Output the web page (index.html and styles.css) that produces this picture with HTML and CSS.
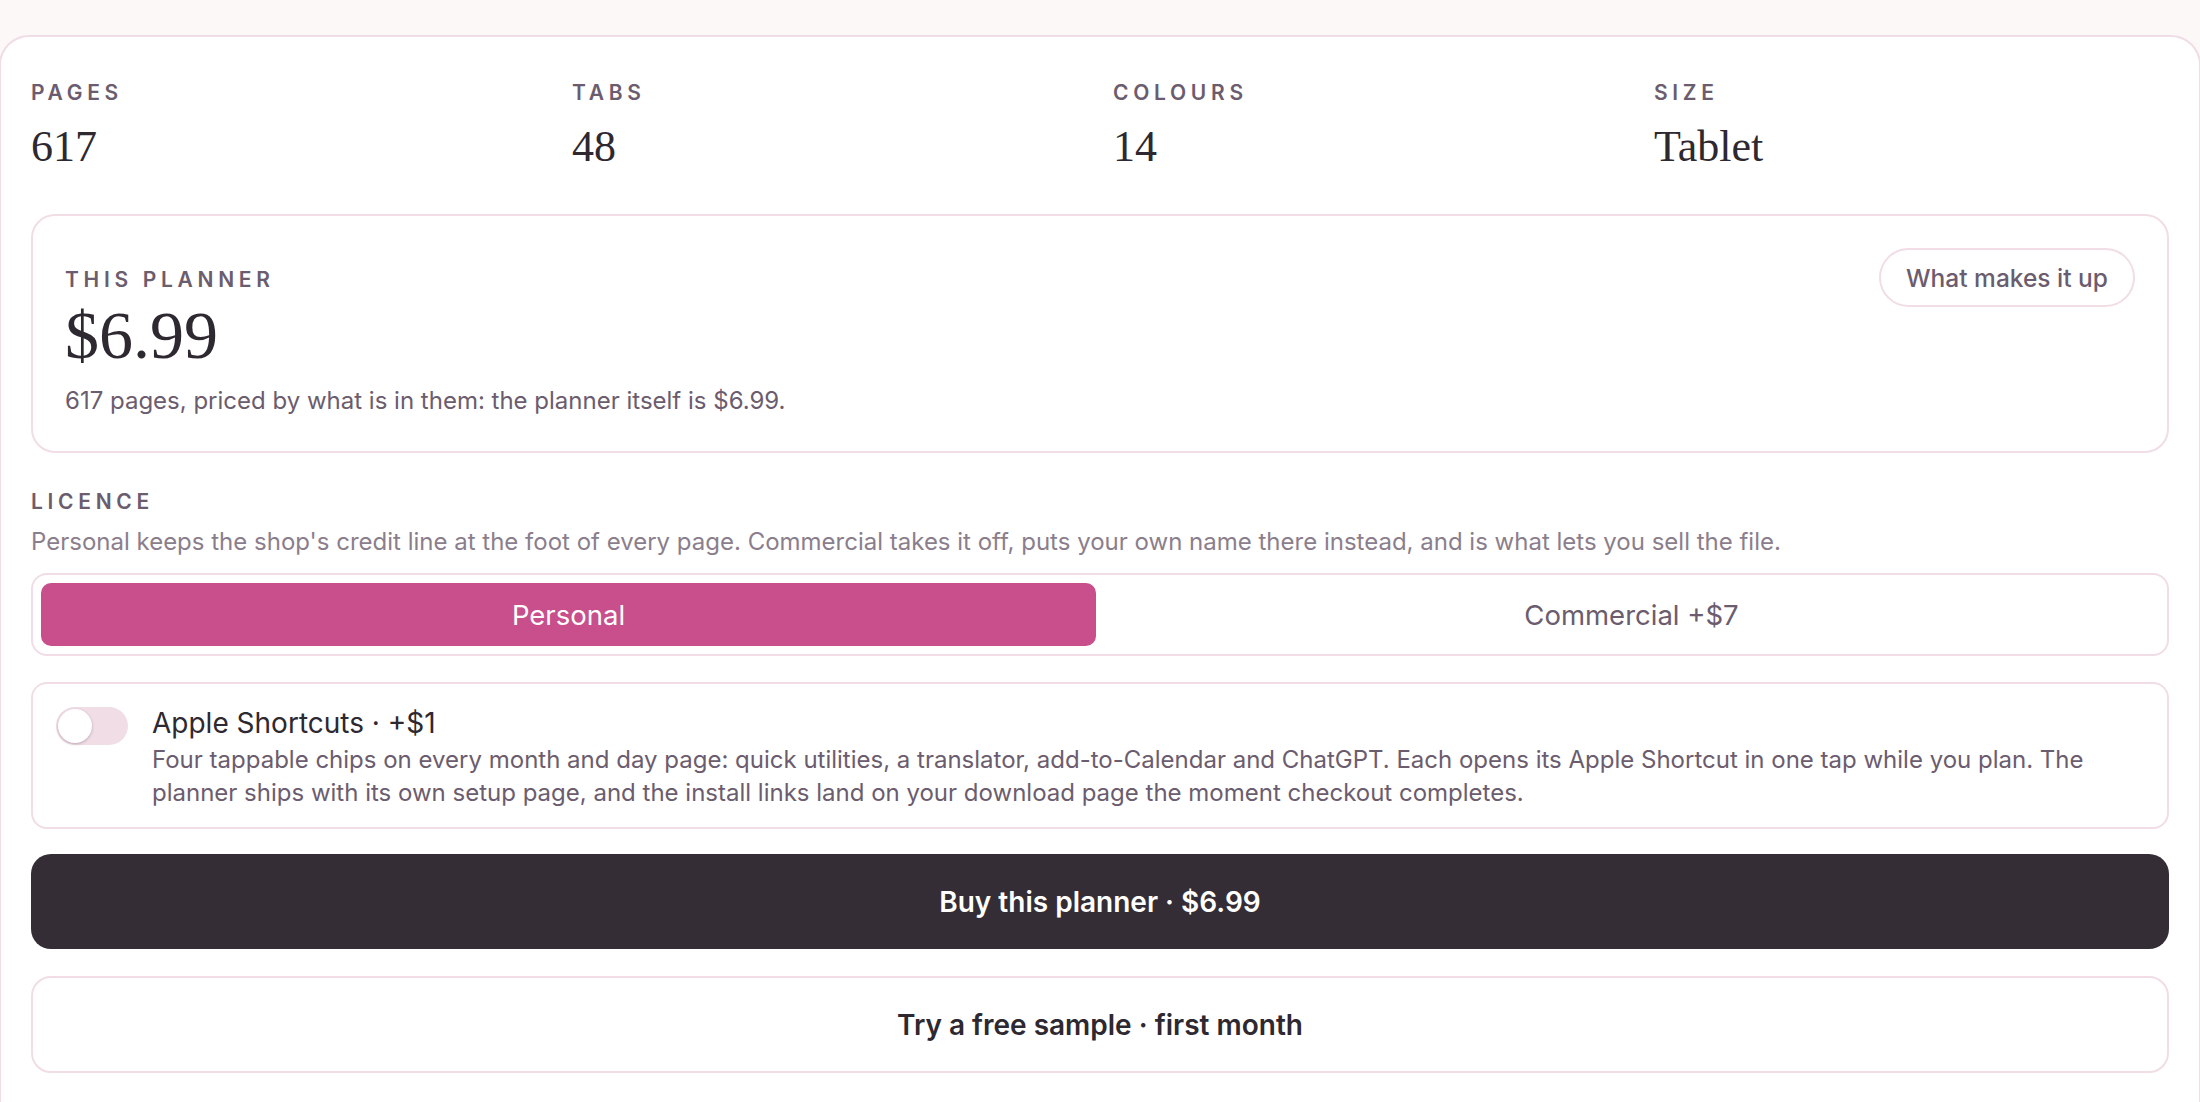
FILE: index.html
```html
<!DOCTYPE html>
<html lang="en">
<head>
<meta charset="utf-8">
<title>Planner checkout</title>
<link rel="stylesheet" href="styles.css">
</head>
<body>
<main class="sheet">
  <section class="stats">
    <div class="stat">
      <div class="label">Pages</div>
      <div class="value">617</div>
    </div>
    <div class="stat">
      <div class="label">Tabs</div>
      <div class="value">48</div>
    </div>
    <div class="stat">
      <div class="label">Colours</div>
      <div class="value">14</div>
    </div>
    <div class="stat">
      <div class="label">Size</div>
      <div class="value">Tablet</div>
    </div>
  </section>

  <section class="card price-card">
    <div class="price-main">
      <div class="label price-label">This planner</div>
      <div class="price">$6.99</div>
      <p class="price-note">617 pages, priced by what is in them: the planner itself is $6.99.</p>
    </div>
    <button class="pill">What makes it up</button>
  </section>

  <section class="licence">
    <div class="label">Licence</div>
    <p class="licence-note">Personal keeps the shop's credit line at the foot of every page. Commercial takes it off, puts your own name there instead, and is what lets you sell the file.</p>
    <div class="segmented">
      <button class="seg seg-active">Personal</button>
      <button class="seg">Commercial +$7</button>
    </div>
  </section>

  <section class="card addon">
    <span class="toggle"><span class="knob"></span></span>
    <div class="addon-text">
      <div class="addon-title">Apple Shortcuts · +$1</div>
      <p class="addon-desc">Four tappable chips on every month and day page: quick utilities, a translator, add-to-Calendar and ChatGPT. Each opens its Apple Shortcut in one tap while you plan. The planner ships with its own setup page, and the install links land on your download page the moment checkout completes.</p>
    </div>
  </section>

  <button class="btn btn-buy">Buy this planner · $6.99</button>
  <button class="btn btn-sample">Try a free sample · first month</button>
</main>
</body>
</html>
```

FILE: styles.css
```css
* { box-sizing: border-box; }

html, body {
  margin: 0;
  padding: 0;
}

body {
  background: #fcf8f7;
  font-family: Inter, "Noto Sans", sans-serif;
  color: #2e2830;
  padding-top: 35px;
  overflow: hidden;
}

.sheet {
  background: #ffffff;
  border: 2px solid #f0dde6;
  border-bottom: none;
  border-radius: 30px 30px 0 0;
  margin: 0 -1px;
  padding: 44px 30px 60px;
  min-height: 1100px;
  display: flex;
  flex-direction: column;
}

.label {
  font-size: 21px;
  line-height: 24px;
  font-weight: 600;
  letter-spacing: 4.7px;
  text-transform: uppercase;
  color: #6b5c6e;
}

.stats {
  display: grid;
  grid-template-columns: repeat(4, 1fr);
  column-gap: 26px;
  margin-bottom: 41px;
}

.value {
  font-family: "Liberation Serif", "Times New Roman", serif;
  font-size: 44px;
  line-height: 52px;
  margin-top: 16px;
  color: #2e2830;
}

.card {
  border: 2px solid #f0dde6;
  border-radius: 24px;
  background: #fff;
}

.price-card {
  display: flex;
  align-items: flex-start;
  justify-content: space-between;
  padding: 32px 32px 33px 32px;
}

.price-main {
  display: flex;
  flex-direction: column;
}

.price-label {
  margin-top: 20px;
}

.price {
  font-family: "Liberation Serif", "Times New Roman", serif;
  font-size: 68px;
  line-height: 68px;
  margin-top: 9px;
  color: #2e2830;
}

.price-note {
  margin: 15px 0 0;
  font-size: 24px;
  line-height: 34px;
  color: #6b5c6e;
}

.pill {
  font-family: inherit;
  font-size: 24.5px;
  font-weight: 500;
  color: #6b5c6e;
  background: #fff;
  border: 2px solid #f0dde6;
  border-radius: 999px;
  height: 59px;
  padding: 0 25px;
  cursor: pointer;
}

.licence {
  margin-top: 37px;
  display: flex;
  flex-direction: column;
}

.licence-note {
  margin: 12px 0 0;
  font-size: 24px;
  line-height: 32px;
  color: #8b7e8c;
}

.segmented {
  margin-top: 15px;
  display: grid;
  grid-template-columns: 1fr 1fr;
  gap: 8px;
  padding: 8px;
  border: 2px solid #f0dde6;
  border-radius: 16px;
}

.seg {
  height: 63px;
  border: none;
  border-radius: 10px;
  background: transparent;
  font-family: inherit;
  font-size: 27.5px;
  color: #6b5c6e;
  cursor: pointer;
}

.seg-active {
  background: #c84f8b;
  color: #ffffff;
}

.addon {
  margin-top: 26px;
  display: flex;
  align-items: flex-start;
  gap: 24px;
  padding: 22px 40px 18px 23px;
  border-radius: 16px;
}

.toggle {
  flex: none;
  width: 72px;
  height: 38px;
  margin-top: 1px;
  border-radius: 19px;
  background: #f0dde6;
  display: flex;
  align-items: center;
  padding: 0 2px;
}

.knob {
  width: 34px;
  height: 34px;
  border-radius: 50%;
  background: #fff;
  box-shadow: 0 1px 3px rgba(60, 30, 50, 0.28);
}

.addon-title {
  font-size: 28px;
  line-height: 35px;
  color: #2e2830;
}

.addon-desc {
  margin: 2px 0 0;
  font-size: 24px;
  line-height: 33px;
  color: #6b5c6e;
}

.btn {
  display: block;
  width: 100%;
  font-family: inherit;
  font-size: 28px;
  font-weight: 600;
  border-radius: 20px;
  cursor: pointer;
}

.btn-buy {
  margin-top: 25px;
  height: 95px;
  background: #342d35;
  color: #ffffff;
  border: none;
}

.btn-sample {
  margin-top: 27px;
  height: 97px;
  background: #ffffff;
  color: #2e2830;
  border: 2px solid #f0dde6;
}
```
